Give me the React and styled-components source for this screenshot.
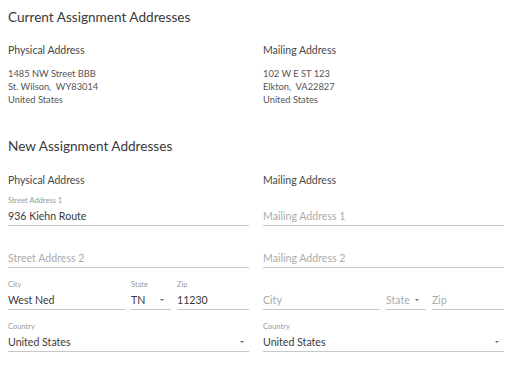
import React from "react";
import styled, { createGlobalStyle } from "styled-components";

const Global = createGlobalStyle`
  html, body { margin: 0; padding: 0; background: #fff; }
  body { font-family: Lato, "Open Sans", sans-serif; }
`;

const Page = styled.div`
  width: 512px;
  padding: 8px 8px 0;
  box-sizing: border-box;
`;

const Section = styled.section`
  margin-top: ${(p) => p.$top || 0}px;
`;

const Heading = styled.h2`
  margin: 0;
  font-size: 13.6px;
  line-height: 18px;
  font-weight: 400;
  color: #3a3a3a;
`;

const Columns = styled.div`
  display: grid;
  grid-template-columns: 1fr 1fr;
  column-gap: 14px;
  margin-top: ${(p) => p.$top}px;
`;

const Column = styled.div`
  display: flex;
  flex-direction: column;
  min-width: 0;
`;

const SubHeading = styled.div`
  font-size: 10.5px;
  line-height: 14px;
  color: #474747;
`;

const AddressBlock = styled.div`
  margin-top: 10px;
  font-size: 9.3px;
  line-height: 13px;
  color: #555;
  white-space: pre;
`;

const Fields = styled.div`
  display: flex;
  flex-direction: column;
  gap: 12px;
  margin-top: 9px;
`;

const Row = styled.div`
  display: grid;
  grid-template-columns: 1fr 40px 72px;
  column-gap: 6px;
`;

const FieldBox = styled.div`
  position: relative;
  display: flex;
  flex-direction: column;
  border-bottom: 1px solid #c8c8c8;
  min-width: 0;
`;

const Label = styled.div`
  font-size: 7.5px;
  line-height: 10px;
  height: 10px;
  color: #9a9a9a;
`;

const Value = styled.div`
  margin-top: 3px;
  font-size: 10.6px;
  line-height: 14px;
  height: 14px;
  padding-bottom: 2px;
  color: ${(p) => (p.$placeholder ? "#ababab" : "#3a3a3a")};
  white-space: nowrap;
`;

const Caret = styled.span`
  position: absolute;
  right: ${(p) => p.$right}px;
  bottom: 8px;
  width: 0;
  height: 0;
  border-left: 2.5px solid transparent;
  border-right: 2.5px solid transparent;
  border-top: 2.5px solid #666;
`;

function Field({ label, value, placeholder, select, caretRight = 5 }) {
  return (
    <FieldBox>
      <Label>{value ? label : ""}</Label>
      <Value $placeholder={!value}>{value || placeholder}</Value>
      {select && <Caret $right={caretRight} />}
    </FieldBox>
  );
}

function Address({ lines }) {
  return (
    <AddressBlock>
      {lines.map((l, i) => (
        <div key={i}>{l}</div>
      ))}
    </AddressBlock>
  );
}

function NewAddress({ title, data, placeholders }) {
  return (
    <Column>
      <SubHeading>{title}</SubHeading>
      <Fields>
        <Field label="Street Address 1" value={data.street1} placeholder={placeholders.street1} />
        <Field label="Street Address 2" value={data.street2} placeholder={placeholders.street2} />
        <Row>
          <Field label="City" value={data.city} placeholder="City" />
          <Field label="State" value={data.state} placeholder="State" select caretRight={7} />
          <Field label="Zip" value={data.zip} placeholder="Zip" />
        </Row>
        <Field label="Country" value={data.country} placeholder="Country" select />
      </Fields>
    </Column>
  );
}

export default function App() {
  return (
    <Page>
      <Global />
      <Section>
        <Heading>Current Assignment Addresses</Heading>
        <Columns $top={17}>
          <Column>
            <SubHeading>Physical Address</SubHeading>
            <Address lines={["1485 NW Street BBB", "St. Wilson,  WY83014", "United States"]} />
          </Column>
          <Column>
            <SubHeading>Mailing Address</SubHeading>
            <Address lines={["102 W E ST 123", "Elkton,  VA22827", "United States"]} />
          </Column>
        </Columns>
      </Section>
      <Section $top={31}>
        <Heading>New Assignment Addresses</Heading>
        <Columns $top={18}>
          <NewAddress
            title="Physical Address"
            data={{ street1: "936 Kiehn Route", city: "West Ned", state: "TN", zip: "11230", country: "United States" }}
            placeholders={{ street1: "Street Address 1", street2: "Street Address 2" }}
          />
          <NewAddress
            title="Mailing Address"
            data={{ country: "United States" }}
            placeholders={{ street1: "Mailing Address 1", street2: "Mailing Address 2" }}
          />
        </Columns>
      </Section>
    </Page>
  );
}
